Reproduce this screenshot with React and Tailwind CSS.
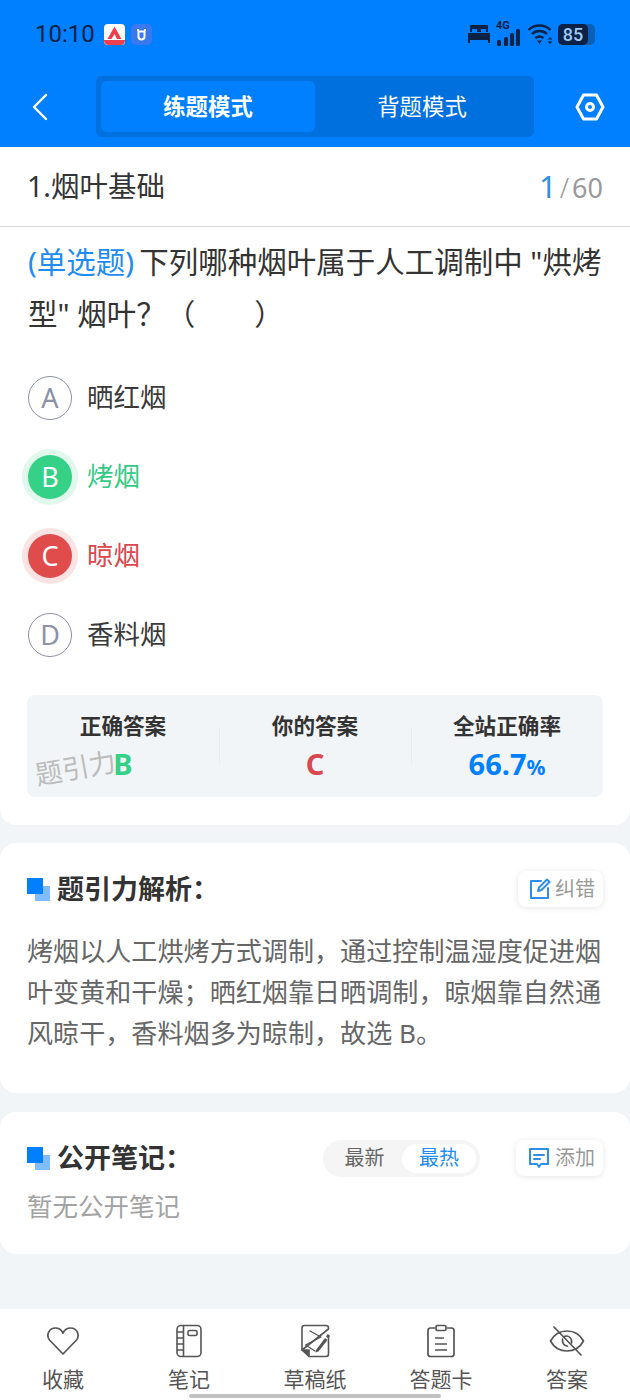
import React from 'react';

const FONT = "font-['Noto_Sans','Noto_Sans_CJK_SC',sans-serif]";

// Two overlapping squares in front of section titles
function TitleMark() {
  return (
    <span className="relative block w-[23px] h-[23px] shrink-0">
      <span className="absolute right-0 bottom-0 w-[15px] h-[15px] bg-[#80bdff]" />
      <span className="absolute left-0 top-0 w-[16px] h-[16px] bg-[#0080ff]" />
    </span>
  );
}

function Option({ letter, text, state }) {
  if (state === 'right' || state === 'wrong') {
    const right = state === 'right';
    return (
      <div className="flex items-center h-[56px] pl-[1px]">
        <div className={`flex items-center justify-center w-[44px] h-[44px] rounded-full text-[27px] text-white ring-[6px] ${right ? 'bg-[#35d186] ring-[#e1f8ed]' : 'bg-[#e04b4b] ring-[#fae3e3]'}`}>
          {letter}
        </div>
        <span className={`ml-[15px] text-[26.5px] ${right ? 'text-[#35c985]' : 'text-[#d9484e]'}`}>{text}</span>
      </div>
    );
  }
  return (
    <div className="flex items-center h-[56px] pl-[1px]">
      <div className="flex items-center justify-center w-[44px] h-[44px] rounded-full border border-[#8c90a8] text-[27px] text-[#8c90a8]">
        {letter}
      </div>
      <span className="ml-[15px] text-[26.5px] text-[#3a3a3a]">{text}</span>
    </div>
  );
}

function Stat({ label, children, divider }) {
  return (
    <div className={`relative flex-1 flex flex-col items-center pt-[17px] ${divider ? "before:content-[''] before:absolute before:left-0 before:top-[33px] before:h-[36px] before:w-px before:bg-[#e9edf1]" : ''}`}>
      <span className="text-[21.6px] leading-[28px] font-bold text-[#333333]">{label}</span>
      {children}
    </div>
  );
}

function SmallBtn({ icon, label }) {
  return (
    <div className="flex items-center gap-[4px] h-[36px] pl-[11px] pr-[8px] rounded-[8px] bg-white shadow-[0_1px_6px_rgba(0,0,0,0.1)]">
      {icon}
      <span className="text-[20px] text-[#999999]">{label}</span>
    </div>
  );
}

function TabItem({ icon, label }) {
  return (
    <div className="flex-1 flex flex-col items-center">
      <div className="h-[36px] flex items-center justify-center">{icon}</div>
      <span className="mt-[5px] text-[21px] leading-[30px] text-[#555555]">{label}</span>
    </div>
  );
}

const tabs = [
  {
    label: '收藏',
    icon: (
      <svg width="34" height="30" viewBox="0 0 34 30" fill="none" stroke="#555" strokeWidth="1.7" strokeLinejoin="round">
        <path d="M17 28 L3.5 14 C0 9.5 2.5 2 9.5 2 C13 2 15.5 4 17 7 C18.5 4 21 2 24.5 2 C31.5 2 34 9.5 30.5 14 Z" />
      </svg>
    ),
  },
  {
    label: '笔记',
    icon: (
      <svg width="26" height="34" viewBox="0 0 26 34" fill="none" stroke="#555" strokeWidth="1.6" strokeLinejoin="round">
        <rect x="1" y="1.5" width="24" height="31" rx="4" />
        <path d="M7.5 1.5V32.5M1 8H7.5M1 14H7.5M1 20H7.5M1 26H7.5" />
        <rect x="12" y="6.5" width="9" height="5" rx="1.5" />
      </svg>
    ),
  },
  {
    label: '草稿纸',
    icon: (
      <svg width="30" height="34" viewBox="0 0 30 34" fill="none" stroke="#555" strokeWidth="1.6" strokeLinejoin="round" strokeLinecap="round">
        <path d="M9 32.5H26C27.5 32.5 28.5 31.5 28.5 30V12M28.5 5V4C28.5 2.5 27.5 1.5 26 1.5H4.5C3 1.5 2 2.5 2 4V26Z" />
        <path d="M2 26H9V32.5Z" fill="#555" />
        <path d="M10 7L21 13L5.5 21L15 27" strokeWidth="1.3" />
        <path d="M16 26L25 14L27.5 16L18.5 27.5L15.5 28.5Z" fill="#555" stroke="none" />
        <path d="M26 12.5L27.8 10L30 11.8L28.2 14.5Z" fill="#555" stroke="none" />
      </svg>
    ),
  },
  {
    label: '答题卡',
    icon: (
      <svg width="28" height="34" viewBox="0 0 28 34" fill="none" stroke="#555" strokeWidth="1.7" strokeLinejoin="round">
        <path d="M8 4H3.5C2 4 1 5 1 6.5V30C1 31.5 2 32.5 3.5 32.5H24.5C26 32.5 27 31.5 27 30V6.5C27 5 26 4 24.5 4H20" />
        <rect x="9" y="1.5" width="10" height="5" rx="1.5" />
        <path d="M8 14H17M8 20H20M8 26H20" />
      </svg>
    ),
  },
  {
    label: '答案',
    icon: (
      <svg width="36" height="30" viewBox="0 0 36 30" fill="none" stroke="#555" strokeWidth="1.7" strokeLinecap="round" strokeLinejoin="round">
        <path d="M1.5 15C5 8.5 11 5 18 5C25 5 31 8.5 34.5 15C31 21.5 25 25 18 25C11 25 5 21.5 1.5 15Z" />
        <path d="M13.5 13C13 17 15 20 18.5 20M14.5 11C16 10 19 9.5 21 11.5C22.5 13 23 15 22.5 17" />
        <path d="M5 1L32 29" />
      </svg>
    ),
  },
];

export default function App() {
  return (
    <div className={`${FONT} relative flex flex-col w-[630px] h-[1400px] overflow-hidden bg-[#f2f5f8]`}>
      {/* status bar + nav */}
      <header className="h-[147px] shrink-0 bg-[#0080ff]">
        <div className="flex items-center justify-between h-[68px] pl-[35px] pr-[35px]">
          <div className="flex items-center">
            <span className="text-[24px] text-[#0b2145] font-['Roboto',sans-serif]">10:10</span>
            <svg className="ml-[9px]" width="21" height="21" viewBox="0 0 21 21">
              <rect width="21" height="21" rx="4" fill="#fff" />
              <path d="M10.5 2.5L17.5 15H13L10.5 10L7.5 15H3.5Z" fill="#ee3f4d" />
              <path d="M0 16H21V17C21 19 19 21 17 21H4C2 21 0 19 0 17Z" fill="#ee3f4d" />
            </svg>
            <svg className="ml-[6px]" width="21" height="21" viewBox="0 0 21 21">
              <rect width="21" height="21" rx="5" fill="#3a78ee" />
              <path d="M7 5V7M14 5V7M7.5 7.5H13.5V12.5C13.5 14.5 12 15.5 10.5 15.5C9 15.5 7.5 14.5 7.5 12.5Z" fill="none" stroke="#fff" strokeWidth="2" />
            </svg>
          </div>
          <div className="flex items-center">
            <svg width="22" height="18" viewBox="0 0 22 18" fill="#0b2145">
              <path d="M3 0H19C19.5 0 20 .5 20 1V7H18V4H13V7H9V4H4V7H2V1C2 .5 2.5 0 3 0Z" />
              <path d="M0 8H22V18H20V15H2V18H0Z" />
            </svg>
            <div className="relative ml-[6px] w-[25px] h-[24px]">
              <span className="absolute left-0 -top-[2px] font-['Roboto',sans-serif] text-[11px] leading-[11px] font-bold text-[#0b2145]">4G</span>
              <svg className="absolute left-0 bottom-0" width="24" height="17" viewBox="0 0 24 17" fill="#0b2145">
                <rect x="1" y="11" width="4" height="6" rx="1.5" />
                <rect x="8" y="8" width="4" height="9" rx="1.5" />
                <rect x="14" y="4" width="4" height="13" rx="1.5" />
                <rect x="20" y="0" width="4" height="17" rx="1.5" />
              </svg>
            </div>
            <svg className="ml-[6px]" width="28" height="22" viewBox="0 0 27 22" fill="none" stroke="#0b2145" strokeWidth="2.4">
              <path d="M1 7C7 1 17 1 23 7M4.5 11C8.5 7 15.5 7 19.5 11M8 15C10.5 13 13.5 13 16 15" />
              <path d="M9.5 17.5H14.5L12 21Z" fill="#0b2145" stroke="none" />
              <path d="M22.5 14L25 16.5H20ZM22.5 21L20 18.5H25Z" fill="#0b2145" stroke="none" />
            </svg>
            <div className="flex items-center ml-[3px] w-[37px] h-[21px] rounded-[5px] bg-[#0a5fb8]">
              <span className="flex items-center justify-center w-[30px] h-[21px] rounded-[5px] bg-[#0b2145] text-[18px] text-[#9cc8f5] font-['Roboto',sans-serif] font-medium">85</span>
            </div>
          </div>
        </div>
        <div className="flex items-center h-[61px] mt-[8px]">
          <div className="w-[96px] pl-[31px]">
            <svg width="18" height="30" viewBox="0 0 18 30" fill="none" stroke="#fff" strokeWidth="2.4" strokeLinecap="round" strokeLinejoin="round">
              <path d="M15 3L3 15L15 27" />
            </svg>
          </div>
          <div className="flex w-[438px] h-[61px] p-[5px] rounded-[6px] bg-[#0070de]">
            <div className="flex items-center justify-center w-[214px] rounded-[6px] bg-[#0080ff] text-[22.4px] font-bold text-white">练题模式</div>
            <div className="flex items-center justify-center flex-1 text-[22.4px] text-white">背题模式</div>
          </div>
          <div className="flex-1 flex justify-center pl-[16px]">
            <svg width="30" height="28" viewBox="0 0 30 28" fill="none" stroke="#fff" strokeWidth="3" strokeLinejoin="round">
              <path d="M8.5 2H21.5L28 14L21.5 26H8.5L2 14Z" />
              <circle cx="15" cy="14" r="3.5" />
            </svg>
          </div>
        </div>
      </header>

      {/* question card */}
      <section className="h-[678px] shrink-0 bg-white rounded-b-[16px]">
        <div className="flex items-center justify-between h-[80px] px-[27px] border-b border-[#dddddd]">
          <span className="text-[28.5px] text-[#333333]">1.烟叶基础</span>
          <span className="text-[#999999] text-[27px]">
            <span className="text-[31px] text-[#2f8fe8]">1</span>
            <span className="mx-[3px] font-light">/</span>60
          </span>
        </div>
        <p className="mt-[9px] pl-[28px] pr-[24px] text-[29.5px] leading-[52px] text-[#333333]">
          <span className="text-[#1e8cf0] mr-[5px]">(单选题)</span>下列哪种烟叶属于人工调制中 "烘烤型" 烟叶？（　　）
        </p>
        <div className="mt-[30px] flex flex-col gap-[23px] px-[27px]">
          <Option letter="A" text="晒红烟" />
          <Option letter="B" text="烤烟" state="right" />
          <Option letter="C" text="晾烟" state="wrong" />
          <Option letter="D" text="香料烟" />
        </div>
        <div className="relative flex mx-[27px] mt-[32px] h-[102px] rounded-[8px] bg-[#f2f5f8]">
          <Stat label="正确答案">
            <span className="mt-[6px] text-[29px] leading-[36px] font-bold text-[#35d186]">B</span>
          </Stat>
          <Stat label="你的答案" divider>
            <span className="mt-[6px] text-[29px] leading-[36px] font-bold text-[#d9484e]">C</span>
          </Stat>
          <Stat label="全站正确率" divider>
            <span className="mt-[6px] text-[29px] leading-[36px] font-bold text-[#0080ff]">66.7<span className="text-[21px]">%</span></span>
          </Stat>
          <span className="absolute left-[8px] top-[58px] text-[27px] leading-[30px] text-[#bcbcbc] -rotate-[10deg]">题引力</span>
        </div>
      </section>

      {/* analysis */}
      <section className="mt-[18px] h-[250px] shrink-0 bg-white rounded-[16px] px-[27px]">
        <div className="flex items-center justify-between pt-[28px] h-[64px]">
          <div className="flex items-center gap-[7px]">
            <TitleMark />
            <span className="text-[27px] font-bold text-[#333333]">题引力解析：</span>
          </div>
          <SmallBtn
            label="纠错"
            icon={
              <svg width="22" height="22" viewBox="0 0 22 22" fill="none" stroke="#2f8fe8" strokeWidth="2" strokeLinecap="round" strokeLinejoin="round">
                <path d="M12 3H2V20H19V10" />
                <path d="M9 13L10 9.5L18 1.5L20.5 4L12.5 12Z" />
              </svg>
            }
          />
        </div>
        <p className="mt-[24px] text-[26.1px] leading-[41px] text-[#666666]">
          烤烟以人工烘烤方式调制，通过控制温湿度促进烟叶变黄和干燥；晒红烟靠日晒调制，晾烟靠自然通风晾干，香料烟多为晾制，故选 B。
        </p>
      </section>

      {/* notes */}
      <section className="mt-[19px] h-[142px] shrink-0 bg-white rounded-[16px] px-[27px]">
        <div className="flex items-center justify-between pt-[28px] h-[64px]">
          <div className="flex items-center gap-[7px]">
            <TitleMark />
            <span className="text-[27px] font-bold text-[#333333]">公开笔记：</span>
          </div>
          <div className="flex items-center gap-[36px]">
            <div className="flex items-center h-[37px] w-[157px] p-[4px] rounded-full bg-[#f5f5f5]">
              <span className="flex-1 text-center text-[20px] text-[#666666]">最新</span>
              <span className="flex items-center justify-center w-[74px] h-[29px] rounded-full bg-white text-[20px] text-[#1e8cf0]">最热</span>
            </div>
            <SmallBtn
              label="添加"
              icon={
                <svg width="24" height="24" viewBox="0 0 24 24" fill="none" stroke="#2f8fe8" strokeWidth="2" strokeLinecap="round" strokeLinejoin="round">
                  <path d="M3 3H21V18H14L12 21L10 18H3Z" />
                  <path d="M7 9H17M7 13H13" />
                </svg>
              }
            />
          </div>
        </div>
        <p className="mt-[11px] text-[25.5px] leading-[38px] text-[#a3a3a3]">暂无公开笔记</p>
      </section>

      {/* bottom tabs */}
      <nav className="relative mt-[55px] flex-1 flex bg-white pt-[14px]">
        {tabs.map((t) => (
          <TabItem key={t.label} icon={t.icon} label={t.label} />
        ))}
        <span className="absolute left-[189px] bottom-[2px] w-[252px] h-[4px] rounded-full bg-[#c2c2c2]" />
      </nav>
    </div>
  );
}
